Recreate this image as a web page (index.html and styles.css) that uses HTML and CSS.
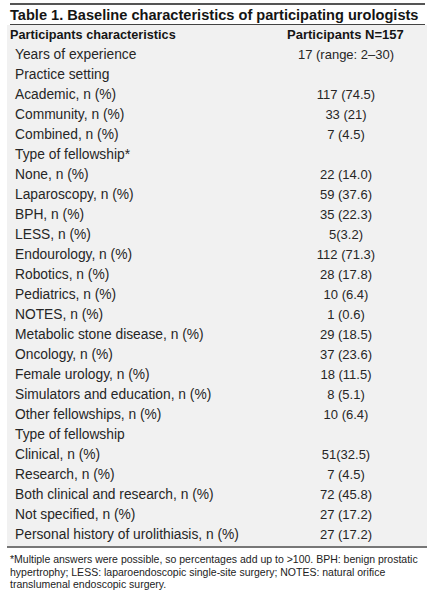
FILE: index.html
```html
<!DOCTYPE html>
<html>
<head>
<meta charset="utf-8">
<link rel="stylesheet" href="styles.css">
</head>
<body>
<div class="sheet">
  <div class="title">Table 1. Baseline characteristics of participating urologists</div>
  <div class="body">
    <div class="row head"><span class="lab">Participants characteristics</span><span class="val">Participants N=157</span></div>
    <div class="row"><span class="lab">Years of experience</span><span class="val">17 (range: 2–30)</span></div>
    <div class="row"><span class="lab">Practice setting</span><span class="val"></span></div>
    <div class="row"><span class="lab">Academic, n (%)</span><span class="val">117 (74.5)</span></div>
    <div class="row"><span class="lab">Community, n (%)</span><span class="val">33 (21)</span></div>
    <div class="row"><span class="lab">Combined, n (%)</span><span class="val">7 (4.5)</span></div>
    <div class="row"><span class="lab">Type of fellowship*</span><span class="val"></span></div>
    <div class="row"><span class="lab">None, n (%)</span><span class="val">22 (14.0)</span></div>
    <div class="row"><span class="lab">Laparoscopy, n (%)</span><span class="val">59 (37.6)</span></div>
    <div class="row"><span class="lab">BPH, n (%)</span><span class="val">35 (22.3)</span></div>
    <div class="row"><span class="lab">LESS, n (%)</span><span class="val">5(3.2)</span></div>
    <div class="row"><span class="lab">Endourology, n (%)</span><span class="val">112 (71.3)</span></div>
    <div class="row"><span class="lab">Robotics, n (%)</span><span class="val">28 (17.8)</span></div>
    <div class="row"><span class="lab">Pediatrics, n (%)</span><span class="val">10 (6.4)</span></div>
    <div class="row"><span class="lab">NOTES, n (%)</span><span class="val">1 (0.6)</span></div>
    <div class="row"><span class="lab">Metabolic stone disease, n (%)</span><span class="val">29 (18.5)</span></div>
    <div class="row"><span class="lab">Oncology, n (%)</span><span class="val">37 (23.6)</span></div>
    <div class="row"><span class="lab">Female urology, n (%)</span><span class="val">18 (11.5)</span></div>
    <div class="row"><span class="lab">Simulators and education, n (%)</span><span class="val">8 (5.1)</span></div>
    <div class="row"><span class="lab">Other fellowships, n (%)</span><span class="val">10 (6.4)</span></div>
    <div class="row"><span class="lab">Type of fellowship</span><span class="val"></span></div>
    <div class="row"><span class="lab">Clinical, n (%)</span><span class="val">51(32.5)</span></div>
    <div class="row"><span class="lab">Research, n (%)</span><span class="val">7 (4.5)</span></div>
    <div class="row"><span class="lab">Both clinical and research, n (%)</span><span class="val">72 (45.8)</span></div>
    <div class="row"><span class="lab">Not specified, n (%)</span><span class="val">27 (17.2)</span></div>
    <div class="row"><span class="lab">Personal history of urolithiasis, n (%)</span><span class="val">27 (17.2)</span></div>
  </div>
  <div class="foot">*Multiple answers were possible, so percentages add up to &gt;100. BPH: benign prostatic hypertrophy; LESS: laparoendoscopic single-site surgery; NOTES: natural orifice translumenal endoscopic surgery.</div>
</div>
</body>
</html>
```
FILE: styles.css
```css
html, body {
  margin: 0;
  padding: 0;
  background: #ffffff;
}
body {
  font-family: "Liberation Sans", Arial, sans-serif;
  color: #1e1e1e;
}
.sheet {
  margin: 3px 5px 0 7px;
  width: 420px;
}
.title {
  border-top: 2px solid #555;
  border-bottom: 1.5px solid #444;
  margin: 0 2px 0 3px;
  height: 19px;
  line-height: 20px;
  font-size: 14.6px;
  font-weight: bold;
  color: #151515;
  white-space: nowrap;
}
.body {
  background: #f1f1f1;
  padding-bottom: 1px;
  border-bottom: 2px solid #777;
}
.row {
  display: grid;
  grid-template-columns: 1fr 140px;
  height: 20px;
  line-height: 20px;
  font-size: 13px;
  color: #262626;
}
.row .lab {
  padding-left: 8px;
  font-size: 13.8px;
  white-space: nowrap;
}
.row .val {
  text-align: center;
  padding-right: 22px;
  white-space: nowrap;
}
.row.head {
  font-weight: bold;
  color: #151515;
}
.row.head .lab {
  padding-left: 3px;
  font-size: 12.7px;
}
.row.head .val {
  padding-right: 30px;
}
.foot {
  font-size: 10.5px;
  line-height: 12.5px;
  padding: 5px 0 3px 3px;
  color: #222;
  border-bottom: 2px solid #777;
}
```
